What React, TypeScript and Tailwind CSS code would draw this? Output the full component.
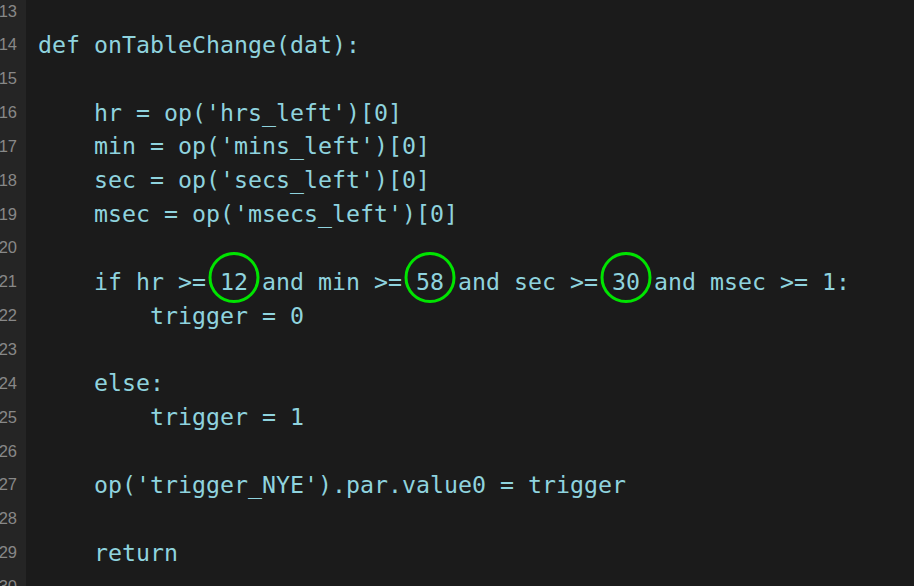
const lines: { n: number; code: React.ReactNode }[] = [];

function Circled({ children }: { children: React.ReactNode }) {
  return (
    <span className="relative inline-block">
      {children}
      <span className="absolute left-1/2 top-1/2 w-[51px] h-[51px] -translate-x-1/2 -translate-y-[30px] rounded-full border-[3px] border-[#00e400]" />
    </span>
  );
}

const code: React.ReactNode[] = [
  "",
  "def onTableChange(dat):",
  "",
  "    hr = op('hrs_left')[0]",
  "    min = op('mins_left')[0]",
  "    sec = op('secs_left')[0]",
  "    msec = op('msecs_left')[0]",
  "",
  <>
    {"    if hr >= "}
    <Circled>12</Circled>
    {" and min >= "}
    <Circled>58</Circled>
    {" and sec >= "}
    <Circled>30</Circled>
    {" and msec >= 1:"}
  </>,
  "        trigger = 0",
  "",
  "    else:",
  "        trigger = 1",
  "",
  "    op('trigger_NYE').par.value0 = trigger",
  "",
  "    return",
  "",
];

code.forEach((c, i) => lines.push({ n: 13 + i, code: c }));

export default function App() {
  return (
    <div className="w-[914px] h-[586px] overflow-hidden bg-[#1b1b1b]">
      <div className="-mt-[6px] flex flex-col">
        {lines.map((l) => (
          <div key={l.n} className="flex h-[33.85px] items-center">
            {/* gutter: numbers are right-aligned and clipped on the left */}
            <div className="w-[26px] h-full shrink-0 bg-[#252525] overflow-hidden flex items-center justify-end pr-[9px]">
              <span className="shrink-0 text-[16.5px] text-[#888888] font-['Liberation_Sans',sans-serif]">
                {l.n}
              </span>
            </div>
            <pre className="pl-[12px] text-[23.25px] leading-[33.85px] text-[#8fd3de] font-['DejaVu_Sans_Mono',monospace]">
              {l.code}
            </pre>
          </div>
        ))}
      </div>
    </div>
  );
}
